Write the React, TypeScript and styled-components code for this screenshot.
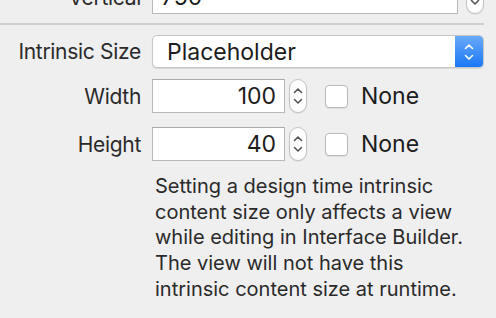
import styled, { createGlobalStyle } from 'styled-components';

const Global = createGlobalStyle`
  html, body {
    margin: 0;
    padding: 0;
    background: #efefef;
  }
  body {
    font-family: Inter, "Noto Sans", "DejaVu Sans", sans-serif;
    color: #262626;
    overflow: hidden;
  }
`

const Panel = styled.div`
  width: 496px;
  height: 318px;
  overflow: hidden;
  padding-right: 12px;
  box-sizing: border-box;
`

const Row = styled.div<{ $top?: number }>`
  display: grid;
  grid-template-columns: 141px 1fr;
  column-gap: 11px;
  align-items: center;
  margin-top: ${p => p.$top ?? 0}px;
`

const Label = styled.span`
  text-align: right;
  font-size: 21px;
  letter-spacing: -0.3px;
  color: #2a2a2a;
  white-space: nowrap;
`

const Controls = styled.div`
  display: flex;
  align-items: center;
`

const Field = styled.div<{ $w: number }>`
  width: ${p => p.$w}px;
  height: 34px;
  box-sizing: border-box;
  background: #fff;
  border: 1px solid #b8b8b8;
  border-top-color: #a9a9a9;
  font-size: 23px;
  color: #1c1c1c;
  display: flex;
  align-items: center;
  padding: 0 8px;
`

const NumberField = styled(Field)`
  justify-content: flex-end;
`

const Stepper = styled.div`
  width: 18px;
  height: 34px;
  box-sizing: border-box;
  margin-left: 4px;
  border: 1px solid #c2c2c2;
  border-radius: 9px;
  background: #fff;
  box-shadow: 0 1px 1px rgba(0, 0, 0, 0.08);
  display: flex;
  align-items: center;
  justify-content: center;
`

const Separator = styled.div`
  height: 2px;
  background: #cfcfcf;
  margin: 9px 0 10px;
`

const Popup = styled.div`
  height: 33px;
  box-sizing: border-box;
  display: flex;
  border: 1px solid #c6c6c6;
  border-radius: 5px;
  background: #fff;
  overflow: hidden;
  box-shadow: 0 1px 1px rgba(0, 0, 0, 0.1);
`

const PopupText = styled.span`
  flex: 1;
  font-size: 23px;
  color: #1c1c1c;
  padding-left: 14px;
  display: flex;
  align-items: center;
`

const PopupArrows = styled.div`
  width: 28px;
  background: linear-gradient(#69a9f9, #1a77f5);
  display: flex;
  align-items: center;
  justify-content: center;
`

const Check = styled.div`
  width: 23px;
  height: 23px;
  box-sizing: border-box;
  margin-left: 18px;
  border: 1px solid #b9b9b9;
  border-radius: 4px;
  background: #fff;
  box-shadow: 0 1px 1px rgba(0, 0, 0, 0.08);
`

const CheckLabel = styled.span`
  margin-left: 13px;
  font-size: 23px;
  color: #1c1c1c;
`

const Help = styled.p`
  margin: 13px 0 0 155px;
  font-size: 20px;
  line-height: 25.7px;
  color: #2a2a2a;
  white-space: nowrap;
`

function Chevrons({ color, up = true, size = 1 }: { color: string; up?: boolean; size?: number }) {
  return (
    <svg width={12 * size} height={24 * size} viewBox="0 0 12 24" fill="none">
      {up && <path d="M2.5 8.5 L6 5 L9.5 8.5" stroke={color} strokeWidth="1.6" strokeLinecap="round" strokeLinejoin="round" />}
      <path d="M2.5 15.5 L6 19 L9.5 15.5" stroke={color} strokeWidth="1.6" strokeLinecap="round" strokeLinejoin="round" />
    </svg>
  )
}

function App() {
  return (
    <Panel>
      <Global />
      <Row $top={-20}>
        <Label>Vertical</Label>
        <Controls>
          <Field $w={306}>750</Field>
          <Stepper style={{ marginLeft: 8 }}>
            <Chevrons color="#555" />
          </Stepper>
        </Controls>
      </Row>
      <Separator />
      <Row>
        <Label>Intrinsic Size</Label>
        <Popup>
          <PopupText>Placeholder</PopupText>
          <PopupArrows>
            <Chevrons color="#fff" />
          </PopupArrows>
        </Popup>
      </Row>
      <Row $top={11}>
        <Label>Width</Label>
        <Controls>
          <NumberField $w={133}>100</NumberField>
          <Stepper>
            <Chevrons color="#555" />
          </Stepper>
          <Check />
          <CheckLabel>None</CheckLabel>
        </Controls>
      </Row>
      <Row $top={14}>
        <Label>Height</Label>
        <Controls>
          <NumberField $w={133}>40</NumberField>
          <Stepper>
            <Chevrons color="#555" />
          </Stepper>
          <Check />
          <CheckLabel>None</CheckLabel>
        </Controls>
      </Row>
      <Help>
        Setting a design time intrinsic<br />
        content size only affects a view<br />
        while editing in Interface Builder.<br />
        The view will not have this<br />
        intrinsic content size at runtime.
      </Help>
    </Panel>
  )
}

export default App;
